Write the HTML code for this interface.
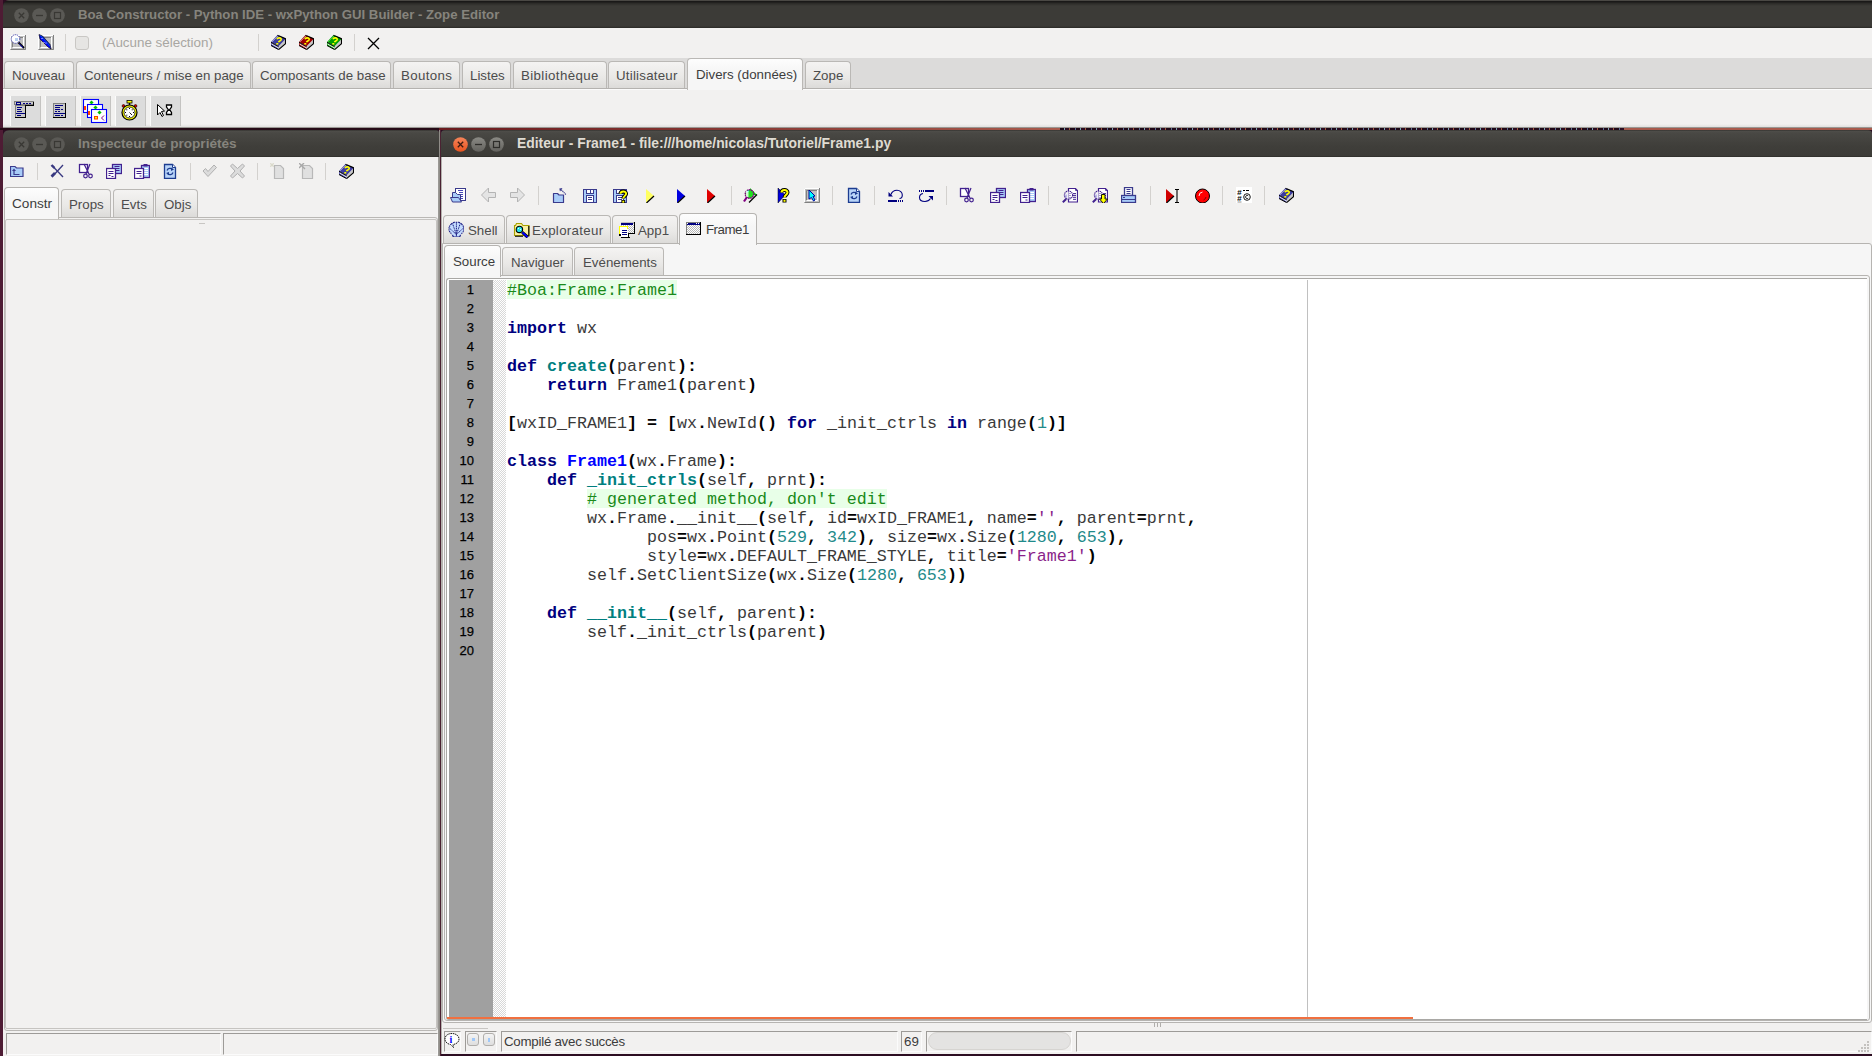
<!DOCTYPE html>
<html><head><meta charset="utf-8"><style>
*{box-sizing:border-box;margin:0;padding:0}
html,body{width:1872px;height:1056px;overflow:hidden;background:#2c0d22;font-family:"Liberation Sans",sans-serif;font-size:13.3px;color:#3c3c3c}
.a{position:absolute}
.t{white-space:nowrap;line-height:15px}
.tb{background:linear-gradient(#2c2b28 0,#4f4e4a 1px,#494844 3px,#3f3e3a 60%,#3c3b37 96%,#2a2926 100%)}
.tbm{background:linear-gradient(#4a4844 0 1px,#1a1918 1px 2px,#2a2926 3px,#3c3b37 6px,#3c3b37 26px,#2a2926 28px)}
.ttl{position:absolute;color:#dfdbd2;font-weight:bold;white-space:nowrap;line-height:15px}
.ttl.in{color:#86847d}
.bg{background:#f2f1f0}
.tab{position:absolute;border:1px solid #bab8b5;border-bottom:none;border-radius:4px 4px 0 0;background:linear-gradient(#f4f3f2,#e9e8e6 60%,#dcdbd9);white-space:nowrap;color:#4c4c4c}
.tab.sel{background:linear-gradient(#fdfdfd,#f6f6f6 40%);color:#3c3c3c}
.sep{position:absolute;width:1px;background:#d3d1ce}
.code{position:absolute;font-family:"Liberation Mono",monospace;font-size:16.67px;line-height:19px;white-space:pre;color:#3a3a3a}
.k{color:#00007f;font-weight:bold}
.d{color:#007f7f;font-weight:bold}
.c{color:#0000ff;font-weight:bold}
.o{font-weight:bold;color:#000}
.n{color:#1f8a8a}
.s{color:#8a1f8a}
.cm{color:#1a8a1a}
.pb{position:absolute;top:96px;width:31px;height:30px;background:#dcdcdc;border-left:1px solid #fbfbfb;border-right:1px solid #c4c3c1}
</style></head><body>
<svg width="0" height="0" style="position:absolute"><defs><linearGradient id="gOr" x1="0" y1="0" x2="0" y2="1"><stop offset="0" stop-color="#f5845a"/><stop offset="1" stop-color="#e9541f"/></linearGradient><linearGradient id="gGr" x1="0" y1="0" x2="0" y2="1"><stop offset="0" stop-color="#8a8984"/><stop offset="1" stop-color="#63625e"/></linearGradient><pattern id="dots" width="2" height="2" patternUnits="userSpaceOnUse"><rect width="2" height="2" fill="#fff"/><rect width="1" height="1" fill="#d8d8d8"/><rect x="1" y="1" width="1" height="1" fill="#d8d8d8"/></pattern></defs></svg>
<div class="a" style="left:0px;top:0px;width:3px;height:1056px;background:#4e1c34"></div>
<div class="a tbm" style="left:3px;top:0;width:1869px;height:28px;border-radius:6px 0 0 0"></div>
<svg class="a" style="left:14px;top:8px" width="15" height="15" viewBox="0 0 15 15"><circle cx="7.5" cy="7.5" r="7.3" fill="#5a5955"/><path d="M4.8 4.8L10.2 10.2M10.2 4.8L4.8 10.2" stroke="#393834" stroke-width="1.3"/></svg><svg class="a" style="left:32px;top:8px" width="15" height="15" viewBox="0 0 15 15"><circle cx="7.5" cy="7.5" r="7.3" fill="#5a5955"/><path d="M4 7.5H11" stroke="#393834" stroke-width="1.3"/></svg><svg class="a" style="left:50px;top:8px" width="15" height="15" viewBox="0 0 15 15"><circle cx="7.5" cy="7.5" r="7.3" fill="#5a5955"/><rect x="4.5" y="4.5" width="6" height="6" fill="none" stroke="#393834" stroke-width="1.2"/></svg>
<div class="ttl in" style="left:78px;top:7px;font-size:13.2px">Boa Constructor - Python IDE - wxPython GUI Builder - Zope Editor</div>
<div class="a" style="left:3px;top:28px;width:1869px;height:30px;background:#f2f1f0"></div>
<div class="a" style="left:3px;top:58px;width:1869px;height:31px;background:#dcdbda;border-bottom:1px solid #b4b2af"></div>
<div class="a" style="left:3px;top:89px;width:1869px;height:38px;background:#f2f1f0;border-top:1px solid #fbfbfb"></div>
<div class="a" style="left:3px;top:124px;width:1869px;height:3px;background:linear-gradient(#f2f1f0,#e2e1df)"></div>
<div class="a" style="left:3px;top:127px;width:1869px;height:1px;background:#9a9894"></div>
<div class="a" style="left:0px;top:128px;width:440px;height:2px;background:#260a16"></div>
<div class="sep" style="left:65px;top:34px;height:17px"></div>
<div class="a" style="left:75px;top:36px;width:14px;height:14px;border:1px solid #c9c7c4;border-radius:3px;background:#e6e5e3"></div>
<div class="a t" style="left:102px;top:35px;color:#a8a6a2;font-size:13.4px">(Aucune sélection)</div>
<div class="sep" style="left:258px;top:34px;height:17px"></div>
<div class="sep" style="left:354px;top:34px;height:17px"></div>
<div class="tab" style="left:4px;top:61px;width:70px;height:27px"><span class="a t" style="left:7px;top:6px">Nouveau</span></div>
<div class="tab" style="left:76px;top:61px;width:175px;height:27px"><span class="a t" style="left:7px;top:6px">Conteneurs / mise en page</span></div>
<div class="tab" style="left:252px;top:61px;width:139px;height:27px"><span class="a t" style="left:7px;top:6px">Composants de base</span></div>
<div class="tab" style="left:393px;top:61px;width:67px;height:27px"><span class="a t" style="left:7px;top:6px"><span style="letter-spacing:0.35px">Boutons</span></span></div>
<div class="tab" style="left:462px;top:61px;width:49px;height:27px"><span class="a t" style="left:7px;top:6px">Listes</span></div>
<div class="tab" style="left:513px;top:61px;width:94px;height:27px"><span class="a t" style="left:7px;top:6px"><span style="letter-spacing:0.38px">Bibliothèque</span></span></div>
<div class="tab" style="left:608px;top:61px;width:77px;height:27px"><span class="a t" style="left:7px;top:6px"><span style="letter-spacing:0.22px">Utilisateur</span></span></div>
<div class="tab" style="left:805px;top:61px;width:46px;height:27px"><span class="a t" style="left:7px;top:6px">Zope</span></div>
<div class="tab sel" style="left:687px;top:58px;width:116px;height:32px"><span class="a t" style="left:8px;top:8px">Divers (données)</span></div>
<div class="pb" style="left:10px"></div>
<div class="pb" style="left:45px"></div>
<div class="pb" style="left:80px"></div>
<div class="pb" style="left:115px"></div>
<div class="pb" style="left:150px"></div>
<div class="a tb" style="left:3px;top:130px;width:436px;height:27px;border-radius:6px 3px 0 0"></div>
<svg class="a" style="left:14px;top:137px" width="15" height="15" viewBox="0 0 15 15"><circle cx="7.5" cy="7.5" r="7.3" fill="#5a5955"/><path d="M4.8 4.8L10.2 10.2M10.2 4.8L4.8 10.2" stroke="#393834" stroke-width="1.3"/></svg><svg class="a" style="left:32px;top:137px" width="15" height="15" viewBox="0 0 15 15"><circle cx="7.5" cy="7.5" r="7.3" fill="#5a5955"/><path d="M4 7.5H11" stroke="#393834" stroke-width="1.3"/></svg><svg class="a" style="left:50px;top:137px" width="15" height="15" viewBox="0 0 15 15"><circle cx="7.5" cy="7.5" r="7.3" fill="#5a5955"/><rect x="4.5" y="4.5" width="6" height="6" fill="none" stroke="#393834" stroke-width="1.2"/></svg>
<div class="ttl in" style="left:78px;top:136px;font-size:13.6px">Inspecteur de propriétés</div>
<div class="a" style="left:3px;top:157px;width:436px;height:899px;background:#f2f1f0;border-right:1px solid #9a9894"></div>
<div class="a" style="left:439px;top:128px;width:1px;height:928px;background:#908d88"></div>
<div class="a" style="left:440px;top:128px;width:1px;height:928px;background:#4a2232"></div>
<div class="a" style="left:439px;top:128px;width:621px;height:2px;background:linear-gradient(90deg,#6a1a1e,#a85a4c)"></div>
<div class="a" style="left:1060px;top:128px;width:560px;height:2px;background:repeating-linear-gradient(90deg,#1e0818 0 4px,#7aa0b0 4px 5px,#2a0a20 5px 9px,#a05a40 9px 10px,#200818 10px 15px,#5a6a90 15px 16px)"></div>
<div class="a" style="left:1624px;top:128px;width:248px;height:2px;background:#a85a4c"></div>
<div class="a tb" style="left:441px;top:130px;width:1431px;height:27px;border-radius:4px 4px 0 0"></div>
<svg class="a" style="left:453px;top:137px" width="15" height="15" viewBox="0 0 15 15"><circle cx="7.5" cy="7.5" r="7.3" fill="url(#gOr)"/><path d="M4.8 4.8L10.2 10.2M10.2 4.8L4.8 10.2" stroke="#3a1a10" stroke-width="1.3"/></svg><svg class="a" style="left:471px;top:137px" width="15" height="15" viewBox="0 0 15 15"><circle cx="7.5" cy="7.5" r="7.3" fill="url(#gGr)"/><path d="M4 7.5H11" stroke="#2e2d2a" stroke-width="1.3"/></svg><svg class="a" style="left:489px;top:137px" width="15" height="15" viewBox="0 0 15 15"><circle cx="7.5" cy="7.5" r="7.3" fill="url(#gGr)"/><rect x="4.5" y="4.5" width="6" height="6" fill="none" stroke="#2e2d2a" stroke-width="1.2"/></svg>
<div class="ttl" style="left:517px;top:136px;font-size:13.9px">Editeur - Frame1 - file:///home/nicolas/Tutoriel/Frame1.py</div>
<div class="a" style="left:441px;top:157px;width:1431px;height:897px;background:#f2f1f0;border-left:1px solid #b4b2ae"></div>
<div class="sep" style="left:538px;top:186px;height:19px"></div>
<div class="sep" style="left:731px;top:186px;height:19px"></div>
<div class="sep" style="left:832px;top:186px;height:19px"></div>
<div class="sep" style="left:874px;top:186px;height:19px"></div>
<div class="sep" style="left:946px;top:186px;height:19px"></div>
<div class="sep" style="left:1048px;top:186px;height:19px"></div>
<div class="sep" style="left:1150px;top:186px;height:19px"></div>
<div class="sep" style="left:1222px;top:186px;height:19px"></div>
<div class="sep" style="left:1264px;top:186px;height:19px"></div>
<div class="a" style="left:442px;top:243px;width:1430px;height:780px;background:#f6f6f6;border:1px solid #b6b4b1;border-radius:0 3px 3px 3px"></div>
<div class="tab" style="left:443px;top:215px;width:62px;height:28px"><span class="a t" style="left:24px;top:7px">Shell</span></div>
<div class="tab" style="left:506px;top:215px;width:105px;height:28px"><span class="a t" style="left:25px;top:7px"><span style="letter-spacing:0.32px">Explorateur</span></span></div>
<div class="tab" style="left:612px;top:215px;width:66px;height:28px"><span class="a t" style="left:25px;top:7px">App1</span></div>
<div class="tab sel" style="left:679px;top:213px;width:78px;height:32px;border-color:#b6b4b1"><span class="a t" style="left:26px;top:8px;letter-spacing:-0.5px">Frame1</span></div>
<div class="a" style="left:444px;top:275px;width:1426px;height:746px;background:#f6f6f6;border:1px solid #b6b4b1;border-radius:0 3px 3px 3px"></div>
<div class="tab" style="left:502px;top:247px;width:71px;height:28px"><span class="a t" style="left:8px;top:7px">Naviguer</span></div>
<div class="tab" style="left:574px;top:247px;width:90px;height:28px"><span class="a t" style="left:8px;top:7px">Evénements</span></div>
<div class="tab sel" style="left:444px;top:245px;width:57px;height:32px;border-color:#b6b4b1"><span class="a t" style="left:8px;top:8px">Source</span></div>
<div class="a" style="left:446px;top:278px;width:1421px;height:742px;background:#fff;border:1px solid #a9a8a5;border-right:none;border-radius:3px 0 0 3px"></div>
<div class="a" style="left:449px;top:280px;width:44px;height:738px;background:#a0a0a0"></div>
<svg class="a" style="left:493px;top:280px" width="13" height="738" viewBox="0 0 13 738"><rect width="13" height="738" fill="url(#dots)"/></svg>
<div class="a" style="left:1307px;top:280px;width:1px;height:738px;background:#c0c0c0"></div>
<div class="a" style="left:447px;top:1017px;width:966px;height:2px;background:#f07040"></div>
<div class="a" style="left:507px;top:280px;width:170px;height:19px;background:#e8ffe8"></div>
<div class="a" style="left:587px;top:489px;width:300px;height:19px;background:#e8ffe8"></div>
<div class="code" style="left:507px;top:281px"><span class="cm">#Boa:Frame:Frame1</span>

<span class="k">import</span> wx

<span class="k">def</span> <span class="d">create</span><span class="o">(</span>parent<span class="o">):</span>
    <span class="k">return</span> Frame1<span class="o">(</span>parent<span class="o">)</span>

<span class="o">[</span>wxID_FRAME1<span class="o">]</span> <span class="o">=</span> <span class="o">[</span>wx<span class="o">.</span>NewId<span class="o">()</span> <span class="k">for</span> _init_ctrls <span class="k">in</span> range<span class="o">(</span><span class="n">1</span><span class="o">)]</span>

<span class="k">class</span> <span class="c">Frame1</span><span class="o">(</span>wx<span class="o">.</span>Frame<span class="o">):</span>
    <span class="k">def</span> <span class="d">_init_ctrls</span><span class="o">(</span>self<span class="o">,</span> prnt<span class="o">):</span>
        <span class="cm"># generated method, don't edit</span>
        wx<span class="o">.</span>Frame<span class="o">.</span>__init__<span class="o">(</span>self<span class="o">,</span> id<span class="o">=</span>wxID_FRAME1<span class="o">,</span> name<span class="o">=</span><span class="s">''</span><span class="o">,</span> parent<span class="o">=</span>prnt<span class="o">,</span>
              pos<span class="o">=</span>wx<span class="o">.</span>Point<span class="o">(</span><span class="n">529</span><span class="o">,</span> <span class="n">342</span><span class="o">),</span> size<span class="o">=</span>wx<span class="o">.</span>Size<span class="o">(</span><span class="n">1280</span><span class="o">,</span> <span class="n">653</span><span class="o">),</span>
              style<span class="o">=</span>wx<span class="o">.</span>DEFAULT_FRAME_STYLE<span class="o">,</span> title<span class="o">=</span><span class="s">'Frame1'</span><span class="o">)</span>
        self<span class="o">.</span>SetClientSize<span class="o">(</span>wx<span class="o">.</span>Size<span class="o">(</span><span class="n">1280</span><span class="o">,</span> <span class="n">653</span><span class="o">))</span>

    <span class="k">def</span> <span class="d">__init__</span><span class="o">(</span>self<span class="o">,</span> parent<span class="o">):</span>
        self<span class="o">.</span>_init_ctrls<span class="o">(</span>parent<span class="o">)</span>
</div>
<div class="a" style="left:449px;top:280px;width:25px;text-align:right;font-size:13px;line-height:19px;color:#000;-webkit-text-stroke:0.25px #000"><div>1</div><div>2</div><div>3</div><div>4</div><div>5</div><div>6</div><div>7</div><div>8</div><div>9</div><div>10</div><div>11</div><div>12</div><div>13</div><div>14</div><div>15</div><div>16</div><div>17</div><div>18</div><div>19</div><div>20</div></div>
<div class="a" style="left:443px;top:1028px;width:45px;height:1px;background:#c8c6c3"></div>
<div class="a" style="left:444px;top:1031px;width:17px;height:21px;border-top:1px solid #9d9b98;border-left:1px solid #9d9b98;border-right:1px solid #fbfbfb;border-bottom:1px solid #fbfbfb"></div>
<div class="a" style="left:465px;top:1031px;width:32px;height:21px;border-top:1px solid #9d9b98;border-left:1px solid #9d9b98;border-right:1px solid #fbfbfb;border-bottom:1px solid #fbfbfb"></div>
<div class="a" style="left:501px;top:1031px;width:397px;height:21px;border-top:1px solid #9d9b98;border-left:1px solid #9d9b98;border-right:1px solid #fbfbfb;border-bottom:1px solid #fbfbfb"></div>
<div class="a" style="left:901px;top:1031px;width:21px;height:21px;border-top:1px solid #9d9b98;border-left:1px solid #9d9b98;border-right:1px solid #fbfbfb;border-bottom:1px solid #fbfbfb"></div>
<div class="a" style="left:926px;top:1031px;width:146px;height:21px;border-top:1px solid #9d9b98;border-left:1px solid #9d9b98;border-right:1px solid #fbfbfb;border-bottom:1px solid #fbfbfb"></div>
<div class="a" style="left:1076px;top:1031px;width:796px;height:21px;border-top:1px solid #9d9b98;border-left:1px solid #9d9b98;border-right:1px solid #fbfbfb;border-bottom:1px solid #fbfbfb"></div>
<div class="a t" style="left:504px;top:1034px;color:#3c3c3c;letter-spacing:-0.25px">Compilé avec succès</div>
<div class="a t" style="left:904px;top:1034px;color:#3c3c3c">69</div>
<div class="a" style="left:928px;top:1032px;width:143px;height:18px;background:#e4e3e2;border:1px solid #d6d4d1;border-radius:9px"></div>
<div class="sep" style="left:37px;top:163px;height:17px"></div>
<div class="sep" style="left:190px;top:163px;height:17px"></div>
<div class="sep" style="left:257px;top:163px;height:17px"></div>
<div class="sep" style="left:325px;top:163px;height:17px"></div>
<div class="a" style="left:4px;top:217px;width:434px;height:814px;background:#f2f1f0;border:1px solid #bab8b5;border-radius:0 3px 3px 3px"></div>
<div class="a" style="left:5px;top:219px;width:432px;height:810px;border:1px solid #c6c4c1;border-radius:2px"></div>
<div class="tab" style="left:61px;top:189px;width:50px;height:28px"><span class="a t" style="left:7px;top:7px">Props</span></div>
<div class="tab" style="left:113px;top:189px;width:41px;height:28px"><span class="a t" style="left:7px;top:7px">Evts</span></div>
<div class="tab" style="left:155px;top:189px;width:43px;height:28px"><span class="a t" style="left:8px;top:7px">Objs</span></div>
<div class="tab sel" style="left:4px;top:187px;width:55px;height:32px;border-color:#b6b4b1"><span class="a t" style="left:7px;top:8px;font-size:13.6px">Constr</span></div>
<div class="a" style="left:6px;top:1033px;width:215px;height:22px;border-top:1px solid #9d9b98;border-left:1px solid #9d9b98;border-right:1px solid #fbfbfb;border-bottom:1px solid #fbfbfb"></div>
<div class="a" style="left:223px;top:1033px;width:215px;height:22px;border-top:1px solid #9d9b98;border-left:1px solid #9d9b98;border-right:1px solid #fbfbfb;border-bottom:1px solid #fbfbfb"></div>
<svg class="a" style="left:10px;top:34px" width="16" height="16" viewBox="0 0 16 16"><rect x="0" y="1" width="16" height="15" fill="#c0c0c0"/><path d="M0.5 15.5V1.5H15.5" fill="none" stroke="#fff"/><path d="M0.5 15.5H15.5V1" fill="none" stroke="#808080"/><path d="M2.5 13.5V3.5H13.5" fill="none" stroke="#808080"/><path d="M2.5 13.5H13.5V3" fill="none" stroke="#fff"/><circle cx="5.5" cy="5" r="4.3" fill="#fff" stroke="#2828a0" stroke-width="0.9" stroke-dasharray="1.2 0.9"/><rect x="5" y="4" width="3" height="3" fill="#b8d0f0"/><path d="M8.5 8.5 L14 14" stroke="#000" stroke-width="2"/><path d="M9.2 9.8 L13 13.6" stroke="#2020ff" stroke-width="0.9"/></svg>
<svg class="a" style="left:38px;top:34px" width="16" height="16" viewBox="0 0 16 16"><rect x="0" y="1" width="16" height="15" fill="#c0c0c0"/><path d="M0.5 15.5V1.5H15.5" fill="none" stroke="#fff"/><path d="M0.5 15.5H15.5V1" fill="none" stroke="#808080"/><path d="M2.5 13.5V3.5H13.5" fill="none" stroke="#808080"/><path d="M2.5 13.5H13.5V3" fill="none" stroke="#fff"/><polygon points="1,0.5 4.5,2 12,10.5 13,15 10,13 2,5" fill="#0000ff" stroke="#000" stroke-width="0.6"/><path d="M2.5 1.5 L12 12" stroke="#00a0a0" stroke-width="0.6"/><circle cx="4" cy="4.5" r="0.6" fill="#fff"/><circle cx="6" cy="8.5" r="0.6" fill="#fff"/><circle cx="8" cy="9" r="0.6" fill="#fff"/></svg>
<svg class="a" style="left:270px;top:34px" width="16" height="16" viewBox="0 0 16 16"><polygon points="1,8 8.6,12.3 8.6,15.5 1,11.5" fill="#3c3ca0"/><path d="M1.5 10 L8.6 14 M1.5 8.5 L8.6 12.5" stroke="#fff" stroke-width="0.9"/><path d="M1 11.5 L8.6 15.6" stroke="#000" stroke-width="1"/><polygon points="8.6,12.3 15.8,4.7 15.8,9.6 8.6,15.5" fill="#c8c8c8"/><path d="M8.6 15.6 L15.8 9.4 M15.5 4.8 V9.6" stroke="#000" stroke-width="1.1" fill="none"/><polygon points="1,8 7.5,1 15.8,4.7 8.6,12.3" fill="#3c3ca0"/><path d="M7.5 1.2 L15.8 4.9" stroke="#000" stroke-width="1.2"/><path d="M1 8.3 L8.6 12.6" stroke="#000" stroke-width="1"/><path d="M2.5 7.5 L8 1.8" stroke="#fff" stroke-width="0.9" stroke-dasharray="1 0.5"/><path d="M7 5.2 C7.5 3.2 11.5 3.5 11.2 5.5 C11 7 9 7 8.5 8.2" fill="none" stroke="#ffff00" stroke-width="1.6"/><rect x="6.3" y="9" width="2" height="1.6" fill="#ffff00"/></svg>
<svg class="a" style="left:298px;top:34px" width="16" height="16" viewBox="0 0 16 16"><polygon points="1,8 8.6,12.3 8.6,15.5 1,11.5" fill="#a00000"/><path d="M1.5 10 L8.6 14 M1.5 8.5 L8.6 12.5" stroke="#fff" stroke-width="0.9"/><path d="M1 11.5 L8.6 15.6" stroke="#000" stroke-width="1"/><polygon points="8.6,12.3 15.8,4.7 15.8,9.6 8.6,15.5" fill="#c8c8c8"/><path d="M8.6 15.6 L15.8 9.4 M15.5 4.8 V9.6" stroke="#000" stroke-width="1.1" fill="none"/><polygon points="1,8 7.5,1 15.8,4.7 8.6,12.3" fill="#a00000"/><path d="M7.5 1.2 L15.8 4.9" stroke="#000" stroke-width="1.2"/><path d="M1 8.3 L8.6 12.6" stroke="#000" stroke-width="1"/><path d="M2.5 7.5 L8 1.8" stroke="#fff" stroke-width="0.9" stroke-dasharray="1 0.5"/><path d="M7 5.2 C7.5 3.2 11.5 3.5 11.2 5.5 C11 7 9 7 8.5 8.2" fill="none" stroke="#ffff00" stroke-width="1.6"/><rect x="6.3" y="9" width="2" height="1.6" fill="#ffff00"/></svg>
<svg class="a" style="left:326px;top:34px" width="16" height="16" viewBox="0 0 16 16"><polygon points="1,8 8.6,12.3 8.6,15.5 1,11.5" fill="#00a000"/><path d="M1.5 10 L8.6 14 M1.5 8.5 L8.6 12.5" stroke="#fff" stroke-width="0.9"/><path d="M1 11.5 L8.6 15.6" stroke="#000" stroke-width="1"/><polygon points="8.6,12.3 15.8,4.7 15.8,9.6 8.6,15.5" fill="#c8c8c8"/><path d="M8.6 15.6 L15.8 9.4 M15.5 4.8 V9.6" stroke="#000" stroke-width="1.1" fill="none"/><polygon points="1,8 7.5,1 15.8,4.7 8.6,12.3" fill="#00a000"/><path d="M7.5 1.2 L15.8 4.9" stroke="#000" stroke-width="1.2"/><path d="M1 8.3 L8.6 12.6" stroke="#000" stroke-width="1"/><path d="M2.5 7.5 L8 1.8" stroke="#8f8" stroke-width="0.9" stroke-dasharray="1 0.5"/><path d="M7 5.2 C7.5 3.2 11.5 3.5 11.2 5.5 C11 7 9 7 8.5 8.2" fill="none" stroke="#ffff00" stroke-width="1.6"/><rect x="6.3" y="9" width="2" height="1.6" fill="#ffff00"/></svg>
<svg class="a" style="left:367px;top:37px" width="13" height="13" viewBox="0 0 13 13"><path d="M1 1L12 12M12 1L1 12" stroke="#000" stroke-width="1.3"/></svg>
<svg class="a" style="left:0px;top:88px" width="200" height="40" viewBox="0 88 200 40"><g transform="translate(14,101)" shape-rendering="crispEdges"><rect x="0" y="0" width="20" height="4" fill="#808080"/><rect x="1" y="1" width="18" height="2" fill="#c8c8c8"/><rect x="2" y="1" width="5" height="3" fill="#000080"/><rect x="3" y="2" width="3" height="1" fill="#c8c8c8"/><rect x="9" y="2" width="2" height="1" fill="#000080"/><rect x="12" y="2" width="2" height="1" fill="#000080"/><rect x="15" y="2" width="2" height="1" fill="#000080"/><rect x="19" y="1" width="1" height="4" fill="#000"/><rect x="12" y="4" width="8" height="1" fill="#000"/><rect x="1" y="4" width="11" height="13" fill="#808080"/><rect x="2" y="5" width="9" height="11" fill="#c8c8c8"/><rect x="11" y="4" width="1" height="13" fill="#000"/><rect x="1" y="16" width="11" height="1" fill="#000"/><rect x="3" y="6" width="5" height="1" fill="#000080"/><rect x="3" y="8" width="4" height="1" fill="#000080"/><rect x="3" y="10" width="5" height="1" fill="#000080"/><rect x="2" y="12" width="9" height="1" fill="#000080"/><rect x="3" y="14" width="4" height="1" fill="#000080"/></g><g transform="translate(53,103)" shape-rendering="crispEdges"><rect x="0" y="0" width="13" height="15" fill="#808080"/><rect x="1" y="1" width="11" height="13" fill="#c8c8c8"/><rect x="12" y="0" width="1" height="15" fill="#000"/><rect x="0" y="14" width="13" height="1" fill="#000"/><rect x="2" y="2" width="8" height="1" fill="#000080"/><rect x="2" y="4" width="5" height="1" fill="#000080"/><rect x="2" y="6" width="5" height="1" fill="#000080"/><rect x="8" y="6" width="2" height="1" fill="#000080"/><rect x="2" y="8" width="2" height="1" fill="#000080"/><rect x="5" y="8" width="2" height="1" fill="#000080"/><rect x="1" y="10" width="11" height="1" fill="#000080"/><rect x="2" y="12" width="5" height="1" fill="#000080"/><rect x="8" y="12" width="2" height="1" fill="#000080"/></g><g transform="translate(83,99)"><rect x="0.5" y="0.5" width="15" height="13" fill="#fff" stroke="#0000ff" stroke-width="1.1"/><rect x="7" y="2" width="3" height="3" fill="#00c000" transform="rotate(45 8.5 3.5)"/><rect x="1" y="7" width="2" height="4" fill="#ff4000"/><rect x="4.5" y="5.5" width="15" height="13" fill="#fff" stroke="#0000ff" stroke-width="1.1"/><rect x="11" y="7" width="3" height="3" fill="#00c000" transform="rotate(45 12.5 8.5)"/><rect x="5" y="12" width="2" height="4" fill="#ff4000"/><rect x="8.5" y="10.5" width="15" height="13" fill="#fff" stroke="#0000ff" stroke-width="1.1"/><rect x="15" y="12" width="3" height="3" fill="#00c000" transform="rotate(45 16.5 13.5)"/><rect x="11" y="17" width="4" height="3.5" fill="#ff4000"/><rect x="12" y="18" width="2" height="1.5" fill="#ffff00"/><path d="M21 16.5 L18.5 19 L21 21.5" stroke="#800080" stroke-width="1" fill="none"/></g><g transform="translate(121,100)"><rect x="6" y="0.5" width="5" height="2.5" fill="#ffff00" stroke="#000" stroke-width="0.8"/><rect x="7.8" y="3" width="1.4" height="3" fill="#000"/><circle cx="2.5" cy="6" r="1.4" fill="#e00000" stroke="#000" stroke-width="0.6"/><circle cx="14.5" cy="6" r="1.4" fill="#e00000" stroke="#000" stroke-width="0.6"/><circle cx="8.5" cy="12.5" r="7.5" fill="#ffff00" stroke="#000" stroke-width="1.2"/><circle cx="8.5" cy="12.5" r="5.5" fill="#fff" stroke="#000" stroke-width="0.8"/><path d="M8.5 12.5 L11 15" stroke="#000" stroke-width="0.9"/><g fill="#000"><rect x="8" y="8" width="1" height="1"/><rect x="8" y="16" width="1" height="1"/><rect x="4" y="12" width="1" height="1"/><rect x="12" y="12" width="1" height="1"/><rect x="5.3" y="9.3" width="1" height="1"/><rect x="10.7" y="9.3" width="1" height="1"/><rect x="5.3" y="14.7" width="1" height="1"/></g></g><g transform="translate(157,104)"><polygon points="0.5,0.5 7.5,7 4.5,7.5 6.5,11.5 5,12.5 3,8.5 0.5,11" fill="#fff" stroke="#000" stroke-width="1"/><polygon points="9.5,1 14.5,1 14.5,3 12.6,5.7 14.5,8.4 14.5,10.5 9.5,10.5 9.5,8.4 11.4,5.7 9.5,3" fill="#fff" stroke="#000" stroke-width="1.3"/></g></svg>
<svg class="a" style="left:10px;top:164px" width="16" height="14" viewBox="0 0 16 14"><path d="M0.5 12.5v-10h4.5l1.5 1.5h6.5v8.5z" fill="#a8ccf8" stroke="#3a3a8c" stroke-width="1.2"/><path d="M4 6.5v4h5.5" fill="none" stroke="#3a3a8c" stroke-width="1.2"/><polygon points="2,7 4,4.5 6,7" fill="#3a3a8c"/></svg>
<svg class="a" style="left:50px;top:164px" width="15" height="15" viewBox="0 0 15 15"><path d="M2 13 L13 1" stroke="#383880" stroke-width="1.3"/><path d="M2 1.5 L13 13" stroke="#383880" stroke-width="1.3"/><path d="M1.5 12.5 L5 9" stroke="#383880" stroke-width="2.6"/><path d="M1.5 1 L4.5 4" stroke="#383880" stroke-width="2.4"/></svg>
<svg class="a" style="left:78px;top:163px" width="16" height="16" viewBox="0 0 16 16"><rect x="1.5" y="1.5" width="8" height="8" fill="#fff" stroke="#42218f" stroke-width="1.3"/><path d="M6 1 L11 11 M12 1 L8 11" stroke="#42218f" stroke-width="1.2"/><circle cx="7.5" cy="13" r="1.8" fill="none" stroke="#42218f" stroke-width="1.2"/><circle cx="12.5" cy="13" r="1.8" fill="none" stroke="#42218f" stroke-width="1.2"/></svg>
<svg class="a" style="left:106px;top:163px" width="16" height="16" viewBox="0 0 16 16"><rect x="6.5" y="1.5" width="9" height="9" fill="#a8ccf8" stroke="#42218f" stroke-width="1.3"/><path d="M8.5 3.5h5M8.5 5.5h5M10 7.5h3.5" stroke="#42218f"/><rect x="0.5" y="5.5" width="9" height="10" fill="#fff" stroke="#42218f" stroke-width="1.3"/><path d="M2.5 8.5h5M2.5 10.5h5M2.5 12.5h2M5.5 13.5h2" stroke="#42218f"/></svg>
<svg class="a" style="left:134px;top:163px" width="16" height="16" viewBox="0 0 16 16"><rect x="7.5" y="2.5" width="8" height="12" fill="#a8ccf8" stroke="#42218f" stroke-width="1.3"/><rect x="9.5" y="1" width="4" height="2.5" fill="#42218f"/><path d="M10 5.5h4M10 7.5h4M10 9.5h4M10 11.5h4" stroke="#fff"/><rect x="0.5" y="5.5" width="9" height="10" fill="#fff" stroke="#42218f" stroke-width="1.3"/><path d="M2.5 8.5h5M2.5 10.5h5M5.5 13h2" stroke="#42218f"/></svg>
<svg class="a" style="left:162px;top:163px" width="16" height="16" viewBox="0 0 16 16"><path d="M2.5 1.5h8l3 3v11h-11z" fill="#b8d4f8" stroke="#1c3c90" stroke-width="1.3"/><path d="M10.5 1.5v3h3" fill="#fff" stroke="#1c3c90"/><path d="M5 7.5a3.2 3.2 0 0 1 5.5 -1 M11 9.5a3.2 3.2 0 0 1 -5.5 1" fill="none" stroke="#1c3c90" stroke-width="1.2"/><polygon points="9,4.5 12,6.5 9,8" fill="#1c3c90"/><polygon points="7,12 4,10 7,9" fill="#1c3c90"/></svg>
<svg class="a" style="left:202px;top:163px" width="16" height="16" viewBox="0 0 16 16"><polygon points="1,8 3.5,5.5 6,8.5 12,2 14.5,4.5 6,13.5" fill="#dcdcdc" stroke="#b0b0b0"/></svg>
<svg class="a" style="left:230px;top:163px" width="16" height="16" viewBox="0 0 16 16"><polygon points="2.5,1 7.5,5.5 12.5,1 14.5,3 10,8 14.5,13 12.5,15 7.5,10.5 2.5,15 0.5,13 5,8 0.5,3" fill="#dcdcdc" stroke="#b0b0b0"/></svg>
<svg class="a" style="left:270px;top:163px" width="16" height="16" viewBox="0 0 16 16"><path d="M4.5 2.5h6l3 3v10h-9z" fill="#e0e0e0" stroke="#b8b8b8" stroke-width="1.2"/><path d="M0 2h4M2 0v4M0 0l4 4M4 0l-4 4" stroke="#d8d8c8" stroke-width="0.8"/></svg>
<svg class="a" style="left:299px;top:163px" width="16" height="16" viewBox="0 0 16 16"><path d="M3.5 2.5h7l3 3v10h-10z" fill="#e0e0e0" stroke="#b8b8b8" stroke-width="1.2"/><path d="M0 0L6 6M0 5L5 0" stroke="#a8a8a8" stroke-width="1.4"/></svg>
<svg class="a" style="left:338px;top:163px" width="16" height="16" viewBox="0 0 16 16"><polygon points="1,8 8.6,12.3 8.6,15.5 1,11.5" fill="#3c3ca0"/><path d="M1.5 10 L8.6 14 M1.5 8.5 L8.6 12.5" stroke="#fff" stroke-width="0.9"/><path d="M1 11.5 L8.6 15.6" stroke="#000" stroke-width="1"/><polygon points="8.6,12.3 15.8,4.7 15.8,9.6 8.6,15.5" fill="#c8c8c8"/><path d="M8.6 15.6 L15.8 9.4 M15.5 4.8 V9.6" stroke="#000" stroke-width="1.1" fill="none"/><polygon points="1,8 7.5,1 15.8,4.7 8.6,12.3" fill="#3c3ca0"/><path d="M7.5 1.2 L15.8 4.9" stroke="#000" stroke-width="1.2"/><path d="M1 8.3 L8.6 12.6" stroke="#000" stroke-width="1"/><path d="M2.5 7.5 L8 1.8" stroke="#fff" stroke-width="0.9" stroke-dasharray="1 0.5"/><path d="M7 5.2 C7.5 3.2 11.5 3.5 11.2 5.5 C11 7 9 7 8.5 8.2" fill="none" stroke="#ffff00" stroke-width="1.6"/><rect x="6.3" y="9" width="2" height="1.6" fill="#ffff00"/></svg>
<svg class="a" style="left:450px;top:187px" width="16" height="16" viewBox="0 0 16 16"><rect x="5.5" y="1.5" width="10" height="12" fill="#fff" stroke="#3a3a8c"/><path d="M8 3.5h5M9 5.5h4M10 7.5h3M10 9.5h3M10 11.5h3" stroke="#4848b8"/><path d="M2.5 5.5h3l2 2h3v7h-8z" fill="#a8ccf8" stroke="#3a3a8c"/><path d="M0.5 10.5h8l3 4.5h-9z" fill="#a8ccf8" stroke="#3a3a8c"/></svg>
<svg class="a" style="left:480px;top:187px" width="16" height="16" viewBox="0 0 16 16"><polygon points="1.5,8 8.5,1 8.5,5.5 15.5,5.5 15.5,10.5 8.5,10.5 8.5,15" fill="#e4e4e4" stroke="#b4b4b4"/></svg>
<svg class="a" style="left:510px;top:187px" width="16" height="16" viewBox="0 0 16 16"><polygon points="14.5,8 7.5,1 7.5,5.5 0.5,5.5 0.5,10.5 7.5,10.5 7.5,15" fill="#e4e4e4" stroke="#b4b4b4"/></svg>
<svg class="a" style="left:551px;top:187px" width="16" height="16" viewBox="0 0 16 16"><path d="M2.5 15.5v-9h4l1.5 1.5h4.5v7.5z" fill="#a8ccf8" stroke="#3a3a8c" stroke-width="1.2" stroke-linejoin="round"/><path d="M14.8 7.5 L10 2.5" stroke="#3a3a8c" stroke-width="1.2" stroke-dasharray="1.2 0.6"/><polygon points="8.3,1.5 11.5,1 9,4.5" fill="#3a3a8c"/></svg>
<svg class="a" style="left:582px;top:187px" width="16" height="16" viewBox="0 0 16 16"><g shape-rendering="crispEdges"><rect x="1" y="2" width="14" height="14" fill="#3a3a8c"/><rect x="2" y="3" width="12" height="12" fill="#a8ccf8"/><rect x="4" y="2" width="8" height="5" fill="#3a3a8c"/><rect x="5" y="3" width="3" height="3" fill="#fff"/><rect x="9" y="3" width="2" height="3" fill="#fff"/><rect x="4" y="8" width="8" height="8" fill="#3a3a8c"/><rect x="5" y="9" width="6" height="6" fill="#fff"/><rect x="6" y="10" width="4" height="1" fill="#3a3a8c"/><rect x="6" y="12" width="4" height="1" fill="#3a3a8c"/></g></svg>
<svg class="a" style="left:612px;top:187px" width="16" height="16" viewBox="0 0 16 16"><g shape-rendering="crispEdges"><rect x="1" y="2" width="14" height="14" fill="#3a3a8c"/><rect x="2" y="3" width="12" height="12" fill="#a8ccf8"/><rect x="4" y="2" width="8" height="5" fill="#3a3a8c"/><rect x="5" y="3" width="3" height="3" fill="#fff"/><rect x="9" y="3" width="2" height="3" fill="#fff"/><rect x="4" y="8" width="8" height="8" fill="#3a3a8c"/><rect x="5" y="9" width="6" height="6" fill="#fff"/><rect x="6" y="10" width="4" height="1" fill="#3a3a8c"/><rect x="6" y="12" width="4" height="1" fill="#3a3a8c"/></g><g transform="translate(7,3) scale(0.95)"><path d="M1.5 4 C1.5 1 7.5 0.5 7.5 4 C7.5 6 4.5 6.5 4.5 9" fill="none" stroke="#000" stroke-width="4"/><rect x="2.5" y="10.5" width="4" height="3.5" fill="#000"/><path d="M1.5 4 C1.5 1 7.5 0.5 7.5 4 C7.5 6 4.5 6.5 4.5 9" fill="none" stroke="#ffff00" stroke-width="2"/><rect x="3.5" y="11.3" width="2" height="2" fill="#ffff00"/></g></svg>
<svg class="a" style="left:641px;top:187px" width="16" height="16" viewBox="0 0 16 16"><polygon points="5,2 13,9 5,16" fill="#ffff60"/><path d="M5.5 16 L13 9" stroke="#000" stroke-width="1.2"/></svg>
<svg class="a" style="left:672px;top:187px" width="16" height="16" viewBox="0 0 16 16"><polygon points="5,2 13,9 5,16" fill="#0000e0"/><path d="M5.5 16 L13 9" stroke="#000" stroke-width="1.2"/></svg>
<svg class="a" style="left:702px;top:187px" width="16" height="16" viewBox="0 0 16 16"><polygon points="5,2 13,9 5,16" fill="#e00000"/><path d="M5.5 16 L13 9" stroke="#000" stroke-width="1.2"/></svg>
<svg class="a" style="left:743px;top:187px" width="16" height="16" viewBox="0 0 16 16"><polygon points="7,1 14,8 7,8" fill="#00d000"/><circle cx="6.5" cy="7" r="4.2" fill="#20e020" stroke="#800080" stroke-width="1.4" stroke-dasharray="1.5 0.6"/><path d="M3.5 5.5a3 3 0 0 1 2.5 -1.5" stroke="#0ff" stroke-width="1.2" fill="none"/><rect x="3" y="4" width="2.5" height="6" fill="#fff" opacity="0.8"/><path d="M4 10 L1 14.5" stroke="#800080" stroke-width="2.2"/><path d="M6 15.5 L14 7.5" stroke="#000" stroke-width="1.3"/></svg>
<svg class="a" style="left:775px;top:187px" width="16" height="16" viewBox="0 0 16 16"><polygon points="3,1 10,8 3,16" fill="#0000e0" stroke="#000" stroke-width="0.5"/><g transform="translate(5,1.5) scale(1.0)"><path d="M1.5 4 C1.5 1 7.5 0.5 7.5 4 C7.5 6 4.5 6.5 4.5 9" fill="none" stroke="#000" stroke-width="4"/><rect x="2.5" y="10.5" width="4" height="3.5" fill="#000"/><path d="M1.5 4 C1.5 1 7.5 0.5 7.5 4 C7.5 6 4.5 6.5 4.5 9" fill="none" stroke="#ffff00" stroke-width="2"/><rect x="3.5" y="11.3" width="2" height="2" fill="#ffff00"/></g></svg>
<svg class="a" style="left:804px;top:187px" width="16" height="16" viewBox="0 0 16 16"><rect x="0" y="1" width="16" height="15" fill="#c0c0c0"/><path d="M0.5 15.5V1.5H15.5" fill="none" stroke="#fff"/><path d="M0.5 15.5H15.5V1" fill="none" stroke="#808080"/><path d="M2.5 13.5V3.5H13.5" fill="none" stroke="#808080"/><path d="M2.5 13.5H13.5V3" fill="none" stroke="#fff"/><polygon points="5,3 11,9 9,9.5 11,13 9.5,14 7.5,10.5 5,12" fill="#00ffff" stroke="#0000a0" stroke-width="1"/></svg>
<svg class="a" style="left:846px;top:187px" width="16" height="16" viewBox="0 0 16 16"><path d="M2.5 1.5h8l3 3v11h-11z" fill="#b8d4f8" stroke="#1c3c90" stroke-width="1.3"/><path d="M10.5 1.5v3h3" fill="#fff" stroke="#1c3c90"/><path d="M5 7.5a3.2 3.2 0 0 1 5.5 -1 M11 9.5a3.2 3.2 0 0 1 -5.5 1" fill="none" stroke="#1c3c90" stroke-width="1.2"/><polygon points="9,4.5 12,6.5 9,8" fill="#1c3c90"/><polygon points="7,12 4,10 7,9" fill="#1c3c90"/></svg>
<svg class="a" style="left:887px;top:187px" width="16" height="16" viewBox="0 0 16 16"><polygon points="1.5,5 1.5,9.5 6,9.5" fill="#00007f"/><path d="M4 7.5 C5 4.5 7.5 3.3 10 3.3 C13 3.3 15.3 5.5 15.3 8 C15.3 10 14 11.5 12.5 11.5" stroke="#00007f" stroke-width="1.1" fill="none"/><path d="M1 14h9" stroke="#00007f" stroke-width="2"/><path d="M11 14h1M13 14h1M15 14h1" stroke="#00007f" stroke-width="2"/></svg>
<svg class="a" style="left:918px;top:187px" width="16" height="16" viewBox="0 0 16 16"><path d="M7 4h9" stroke="#00007f" stroke-width="2"/><path d="M1 4h1M3 4h1M5 4h1" stroke="#00007f" stroke-width="2"/><path d="M5 6.5 C2.5 7 1.5 9 1.5 10.5 C1.5 13 4 14.5 7 14.5 C10 14.5 11.5 13 12.5 11.5" stroke="#00007f" stroke-width="1.1" fill="none"/><polygon points="10.5,9 15,9 15,13.5" fill="#00007f"/></svg>
<svg class="a" style="left:959px;top:187px" width="16" height="16" viewBox="0 0 16 16"><rect x="1.5" y="1.5" width="8" height="8" fill="#fff" stroke="#42218f" stroke-width="1.3"/><path d="M6 1 L11 11 M12 1 L8 11" stroke="#42218f" stroke-width="1.2"/><circle cx="7.5" cy="13" r="1.8" fill="none" stroke="#42218f" stroke-width="1.2"/><circle cx="12.5" cy="13" r="1.8" fill="none" stroke="#42218f" stroke-width="1.2"/></svg>
<svg class="a" style="left:990px;top:187px" width="16" height="16" viewBox="0 0 16 16"><rect x="6.5" y="1.5" width="9" height="9" fill="#a8ccf8" stroke="#42218f" stroke-width="1.3"/><path d="M8.5 3.5h5M8.5 5.5h5M10 7.5h3.5" stroke="#42218f"/><rect x="0.5" y="5.5" width="9" height="10" fill="#fff" stroke="#42218f" stroke-width="1.3"/><path d="M2.5 8.5h5M2.5 10.5h5M2.5 12.5h2M5.5 13.5h2" stroke="#42218f"/></svg>
<svg class="a" style="left:1020px;top:187px" width="16" height="16" viewBox="0 0 16 16"><rect x="7.5" y="2.5" width="8" height="12" fill="#a8ccf8" stroke="#42218f" stroke-width="1.3"/><rect x="9.5" y="1" width="4" height="2.5" fill="#42218f"/><path d="M10 5.5h4M10 7.5h4M10 9.5h4M10 11.5h4" stroke="#fff"/><rect x="0.5" y="5.5" width="9" height="10" fill="#fff" stroke="#42218f" stroke-width="1.3"/><path d="M2.5 8.5h5M2.5 10.5h5M5.5 13h2" stroke="#42218f"/></svg>
<svg class="a" style="left:1062px;top:187px" width="16" height="16" viewBox="0 0 16 16"><path d="M6.5 1.5h7l2 2v11.5h-9z" fill="#fff" stroke="#42218f" stroke-width="1.2"/><path d="M13.5 1.5v2h2" fill="none" stroke="#42218f" stroke-width="0.8"/><path d="M11 6.6h3M11 8.4h3M11 10.3h3M11 12.3h3" stroke="#42218f" stroke-width="1"/><circle cx="6.5" cy="8.1" r="4.1" fill="#fff" fill-opacity="0.6" stroke="#42218f" stroke-width="1.1" stroke-dasharray="1.4 0.6"/><path d="M4 7.5v3" stroke="#6060d0" stroke-width="0.8"/><path d="M7.5 6.5h1M7.5 8.5h1M7.5 10.5h1" stroke="#42218f" stroke-width="0.9"/><path d="M4.2 12 L0.8 15.3" stroke="#42218f" stroke-width="2"/></svg>
<svg class="a" style="left:1092px;top:187px" width="16" height="16" viewBox="0 0 16 16"><path d="M6.5 1.5h7l2 2v11.5h-9z" fill="#fff" stroke="#42218f" stroke-width="1.2"/><path d="M13.5 1.5v2h2" fill="none" stroke="#42218f" stroke-width="0.8"/><path d="M11 6.6h3M11 8.4h3M11 10.3h3M11 12.3h3" stroke="#42218f" stroke-width="1"/><circle cx="6.5" cy="8.1" r="4.1" fill="#fff" fill-opacity="0.6" stroke="#42218f" stroke-width="1.1" stroke-dasharray="1.4 0.6"/><path d="M4 7.5v3" stroke="#6060d0" stroke-width="0.8"/><path d="M7.5 6.5h1M7.5 8.5h1M7.5 10.5h1" stroke="#42218f" stroke-width="0.9"/><path d="M4.2 12 L0.8 15.3" stroke="#42218f" stroke-width="2"/><polygon points="9.5,7.5 13,7.5 13,12 15.5,12 11.5,16.5 7.5,12 9.5,12" fill="#ffff00" stroke="#000" stroke-width="0.9"/></svg>
<svg class="a" style="left:1121px;top:187px" width="16" height="16" viewBox="0 0 16 16"><rect x="3.5" y="0.5" width="8" height="8" fill="#fff" stroke="#3a3a8c" stroke-width="1.3"/><path d="M5.5 2.5h4M5.5 4.5h4M5.5 6.5h4" stroke="#3a3a8c"/><rect x="0.5" y="8.5" width="14" height="7" fill="#a8ccf8" stroke="#3a3a8c" stroke-width="1.3"/><path d="M1 12.5h13" stroke="#3a3a8c"/><path d="M2 10.5h2" stroke="#3a3a8c"/></svg>
<svg class="a" style="left:1164px;top:187px" width="16" height="16" viewBox="0 0 16 16"><polygon points="2,2 10,9 2,16" fill="#d00000"/><path d="M2.5 16 L10 9" stroke="#000" stroke-width="1.2"/><path d="M11 2.5h4M11 15.5h4M13 2.5v13" stroke="#000" stroke-width="1.1"/></svg>
<svg class="a" style="left:1194px;top:187px" width="16" height="16" viewBox="0 0 16 16"><circle cx="8.5" cy="9" r="7" fill="#ff0000" stroke="#000" stroke-width="1"/><path d="M5 9a4 4 0 0 1 3.5 -4" fill="none" stroke="#fff" stroke-width="0.9"/><path d="M12 10a4 4 0 0 1 -2.5 3" fill="none" stroke="#600" stroke-width="0.8"/></svg>
<svg class="a" style="left:1236px;top:187px" width="16" height="16" viewBox="0 0 16 16"><rect x="0" y="0" width="16" height="16" fill="#fff"/><text x="1" y="7.5" font-family="Liberation Mono" font-weight="bold" font-size="8" fill="#000">#</text><text x="1" y="13.5" font-family="Liberation Mono" font-weight="bold" font-size="8" fill="#000">#</text><path d="M7 3.5h2M10 3.5h3" stroke="#000" stroke-width="1"/><circle cx="11" cy="10" r="3.3" fill="none" stroke="#000" stroke-width="0.9"/><path d="M12.2 8.8a1.6 1.6 0 1 0 0 2.4" fill="none" stroke="#000" stroke-width="0.8"/><path d="M1.5 15h4" stroke="#777" stroke-width="0.8"/></svg>
<svg class="a" style="left:1278px;top:187px" width="16" height="16" viewBox="0 0 16 16"><polygon points="1,8 8.6,12.3 8.6,15.5 1,11.5" fill="#3c3ca0"/><path d="M1.5 10 L8.6 14 M1.5 8.5 L8.6 12.5" stroke="#fff" stroke-width="0.9"/><path d="M1 11.5 L8.6 15.6" stroke="#000" stroke-width="1"/><polygon points="8.6,12.3 15.8,4.7 15.8,9.6 8.6,15.5" fill="#c8c8c8"/><path d="M8.6 15.6 L15.8 9.4 M15.5 4.8 V9.6" stroke="#000" stroke-width="1.1" fill="none"/><polygon points="1,8 7.5,1 15.8,4.7 8.6,12.3" fill="#3c3ca0"/><path d="M7.5 1.2 L15.8 4.9" stroke="#000" stroke-width="1.2"/><path d="M1 8.3 L8.6 12.6" stroke="#000" stroke-width="1"/><path d="M2.5 7.5 L8 1.8" stroke="#fff" stroke-width="0.9" stroke-dasharray="1 0.5"/><path d="M7 5.2 C7.5 3.2 11.5 3.5 11.2 5.5 C11 7 9 7 8.5 8.2" fill="none" stroke="#ffff00" stroke-width="1.6"/><rect x="6.3" y="9" width="2" height="1.6" fill="#ffff00"/></svg>
<svg class="a" style="left:448px;top:221px" width="16" height="16" viewBox="0 0 16 16"><polygon points="6,1.3 11,1.3 14,3 15.7,6 15.7,10 12.5,13.8 12.5,15 11.5,16.3 5.5,16.3 4.5,15 4.5,13.8 1,10 1,6 3,3" fill="#c4dcff"/><path d="M6 1.3H11 M3.2 3 L1 6 V10 L4 13.5 M13.7 3 L15.8 6 V10 L12.8 13.5 M3.2 3 L6 1.3 M13.7 3 L11 1.3" fill="none" stroke="#1c1c80" stroke-width="1.1" stroke-dasharray="1.3 0.7"/><path d="M8.4 1.5V16 M8.4 13.5 L4.5 2.5 M8.4 13.5 L12.3 2.5 M8.4 13.5 L1.3 7 M8.4 13.5 L15.5 7" stroke="#1c1c80" stroke-width="1" stroke-dasharray="1.2 0.6"/><path d="M4.5 14 L5.5 16.2 H11.5 L12.5 14" fill="none" stroke="#1c1c80" stroke-width="1.2"/></svg>
<svg class="a" style="left:513px;top:221px" width="17" height="17" viewBox="0 0 17 17"><path d="M1.5 14.5V4.5h1l1-2h5l1.5 2h6v10z" fill="#f8f0a0" stroke="#a8a000" stroke-width="1.1"/><path d="M2 15.3H10M15.8 5v10.5" stroke="#000" stroke-width="1.1"/><circle cx="6.4" cy="8.4" r="3.2" fill="#20e0e8" stroke="#000" stroke-width="1.1"/><circle cx="5.5" cy="7.5" r="0.6" fill="#fff"/><circle cx="7.5" cy="8.5" r="0.6" fill="#fff"/><path d="M9.3 11.3 L14.7 16.2" stroke="#000" stroke-width="3"/><path d="M9.5 11.5 L14.5 16" stroke="#0000ff" stroke-width="1.8"/></svg>
<svg class="a" style="left:619px;top:221px" width="16" height="17" viewBox="0 0 16 17"><defs><pattern id="dithA" width="2" height="2" patternUnits="userSpaceOnUse"><rect width="2" height="2" fill="#fff"/><rect width="1" height="1" fill="#b8b8b8"/><rect x="1" y="1" width="1" height="1" fill="#b8b8b8"/></pattern></defs><g shape-rendering="crispEdges"><rect x="2" y="1" width="13" height="11" fill="url(#dithA)"/><rect x="2" y="1" width="13" height="1" fill="#c0c0c0"/><rect x="2" y="2" width="12" height="2" fill="#000080"/><rect x="15" y="1" width="1" height="12" fill="#000"/><rect x="9" y="12" width="7" height="1" fill="#000"/><rect x="0" y="5" width="9" height="10" fill="#ffff00"/><rect x="1" y="6" width="7" height="8" fill="#fff"/><rect x="0" y="13" width="2" height="2" fill="#000"/><rect x="2" y="8" width="7" height="9" fill="#fff"/><rect x="3" y="9" width="5" height="1" fill="#000080"/><rect x="3" y="11" width="5" height="1" fill="#000080"/><rect x="3" y="13" width="5" height="1" fill="#000080"/><rect x="2" y="16" width="9" height="1" fill="#000"/><rect x="9" y="12" width="1" height="5" fill="#000"/></g></svg>
<svg class="a" style="left:686px;top:222px" width="15" height="13" viewBox="0 0 15 13"><defs><pattern id="dithF" width="2" height="2" patternUnits="userSpaceOnUse"><rect width="2" height="2" fill="#fff"/><rect width="1" height="1" fill="#b8b8b8"/><rect x="1" y="1" width="1" height="1" fill="#b8b8b8"/></pattern></defs><g shape-rendering="crispEdges"><rect x="0" y="0" width="15" height="13" fill="url(#dithF)"/><rect x="0" y="0" width="15" height="1" fill="#808080"/><rect x="0" y="0" width="1" height="13" fill="#808080"/><rect x="1" y="1" width="13" height="2" fill="#000080"/><rect x="1" y="1" width="1" height="1" fill="#fff"/><rect x="10" y="1" width="1" height="1" fill="#fff"/><rect x="12" y="1" width="1" height="1" fill="#fff"/><rect x="14" y="0" width="1" height="13" fill="#000"/><rect x="0" y="12" width="15" height="1" fill="#000"/></g></svg>
<svg class="a" style="left:444px;top:1032px" width="17" height="17" viewBox="0 0 17 17"><path d="M8 1.5C3.5 1.5 1 4 1 7c0 3 2.5 5 5.5 5.5l3 3 -0.5 -3c3.5 -0.5 6 -2.5 6 -5.5 0 -3 -3 -5.5 -7 -5.5z" fill="#fff" stroke="#000" stroke-width="0.9" stroke-dasharray="1.5 0.7"/><text x="5.5" y="11" font-family="Liberation Serif" font-weight="bold" font-size="10" fill="#0000ff">i</text></svg>
<div class="a" style="left:467px;top:1033px;width:12px;height:13px;border:1px solid #b0aeab;border-radius:3px;background:linear-gradient(#f4f4f4,#dedede)"></div>
<div class="a" style="left:483px;top:1033px;width:12px;height:13px;border:1px solid #b0aeab;border-radius:3px;background:linear-gradient(#f4f4f4,#dedede)"></div>
<div class="a" style="left:472px;top:1038px;width:3px;height:3px;background:#a0c8f8"></div>
<div class="a" style="left:488px;top:1038px;width:2px;height:4px;background:#a0c8f8"></div>
<div class="a" style="left:1154px;top:1023px;width:1px;height:4px;background:#b0aeab"></div>
<div class="a" style="left:1157px;top:1023px;width:1px;height:4px;background:#b0aeab"></div>
<div class="a" style="left:1160px;top:1023px;width:1px;height:4px;background:#b0aeab"></div>
<div class="a" style="left:1867px;top:1041px;width:2px;height:2px;background:#c4c2bf"></div>
<div class="a" style="left:1864px;top:1044px;width:2px;height:2px;background:#c4c2bf"></div>
<div class="a" style="left:1867px;top:1044px;width:2px;height:2px;background:#c4c2bf"></div>
<div class="a" style="left:1861px;top:1047px;width:2px;height:2px;background:#c4c2bf"></div>
<div class="a" style="left:1864px;top:1047px;width:2px;height:2px;background:#c4c2bf"></div>
<div class="a" style="left:1867px;top:1047px;width:2px;height:2px;background:#c4c2bf"></div>
<div class="a" style="left:1858px;top:1050px;width:2px;height:2px;background:#c4c2bf"></div>
<div class="a" style="left:1861px;top:1050px;width:2px;height:2px;background:#c4c2bf"></div>
<div class="a" style="left:1864px;top:1050px;width:2px;height:2px;background:#c4c2bf"></div>
<div class="a" style="left:1867px;top:1050px;width:2px;height:2px;background:#c4c2bf"></div>
<div class="a" style="left:199px;top:223px;width:6px;height:1px;background:#c8c6c3"></div>
</body></html>
